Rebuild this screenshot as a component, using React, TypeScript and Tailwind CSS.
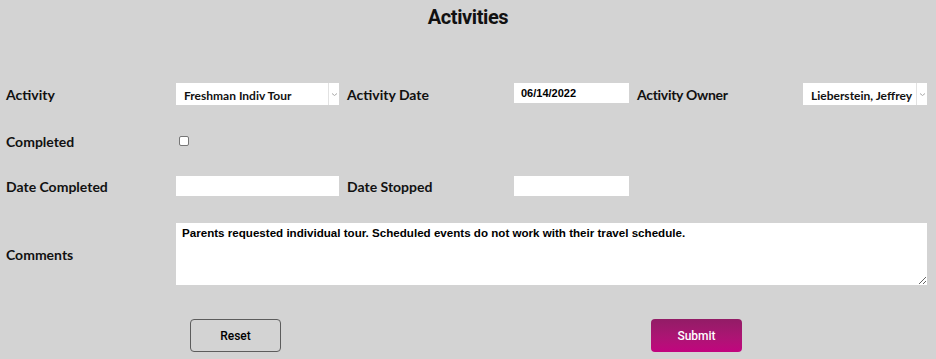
import React from "react";

const label = "font-['Lato',sans-serif] text-[14px] font-bold text-[#111]";

function FakeSelect({ value, width }: { value: string; width: string }) {
  return (
    <div className={`flex h-[22px] ${width} items-stretch bg-white`}>
      <div className="flex flex-1 items-center overflow-hidden whitespace-nowrap pl-[8px] pt-[3px] font-['Lato',sans-serif] text-[12px] font-bold text-[#111]">
        {value}
      </div>
      <div className="flex w-[11px] shrink-0 items-center justify-center border-l border-[#e2e2e2]">
        <svg width="7" height="5" viewBox="0 0 7 5">
          <path d="M1 1.5 L3.5 3.5 L6 1.5" fill="none" stroke="#aaa" strokeWidth="1" />
        </svg>
      </div>
    </div>
  );
}

function TextBox({ value, width, height }: { value?: string; width: string; height: string }) {
  return (
    <div
      className={`flex ${width} ${height} items-center bg-white pl-[7px] font-['Liberation_Sans',Arial,sans-serif] text-[11px] font-bold text-black`}
    >
      {value}
    </div>
  );
}

export default function App() {
  return (
    <div className="h-[359px] w-[936px] overflow-hidden bg-[#d3d3d3] px-[6px]">
      <h1 className="pt-[4px] text-center font-['Roboto',sans-serif] text-[20px] font-bold leading-[26px] tracking-[-0.4px] text-[#111]">
        Activities
      </h1>

      <div className="mt-[53px] flex h-[22px] items-center">
        <div className={`w-[170px] ${label}`}>Activity</div>
        <FakeSelect value="Freshman Indiv Tour" width="w-[163px]" />
        <div className={`ml-[8px] w-[167px] ${label}`}>Activity Date</div>
        <div className="self-start">
          <TextBox value="06/14/2022" width="w-[115px]" height="h-[20px]" />
        </div>
        <div className={`ml-[8px] w-[166px] tracking-[-0.3px] ${label}`}>Activity Owner</div>
        <FakeSelect value="Lieberstein, Jeffrey" width="w-[124px]" />
      </div>

      <div className="mt-[25px] flex h-[22px] items-center">
        <div className={`w-[173px] ${label}`}>Completed</div>
        <span className="block h-[10px] w-[10px] rounded-[2px] border border-[#767676] bg-white" />
      </div>

      <div className="mt-[24px] flex h-[20px] items-center">
        <div className={`w-[170px] ${label}`}>Date Completed</div>
        <TextBox width="w-[163px]" height="h-[20px]" />
        <div className={`ml-[8px] w-[167px] ${label}`}>Date Stopped</div>
        <TextBox width="w-[115px]" height="h-[20px]" />
      </div>

      <div className="mt-[27px] flex items-center">
        <div className={`w-[170px] ${label}`}>Comments</div>
        <textarea
          readOnly
          defaultValue="Parents requested individual tour. Scheduled events do not work with their travel schedule."
          className="h-[62px] w-[751px] resize bg-white px-[6px] py-[3px] font-['Liberation_Sans',Arial,sans-serif] text-[11.6px] font-bold leading-[14px] text-black outline-none"
        />
      </div>

      <div className="mt-[34px] flex">
        <button className="ml-[184px] h-[33px] w-[91px] rounded-[4px] border border-[#5c5c5c] font-['Roboto',sans-serif] text-[12px] font-medium text-black">
          Reset
        </button>
        <button className="ml-[370px] h-[33px] w-[91px] rounded-[4px] bg-gradient-to-b from-[#921c66] to-[#c2037f] font-['Roboto',sans-serif] text-[12px] font-medium text-white">
          Submit
        </button>
      </div>
    </div>
  );
}
